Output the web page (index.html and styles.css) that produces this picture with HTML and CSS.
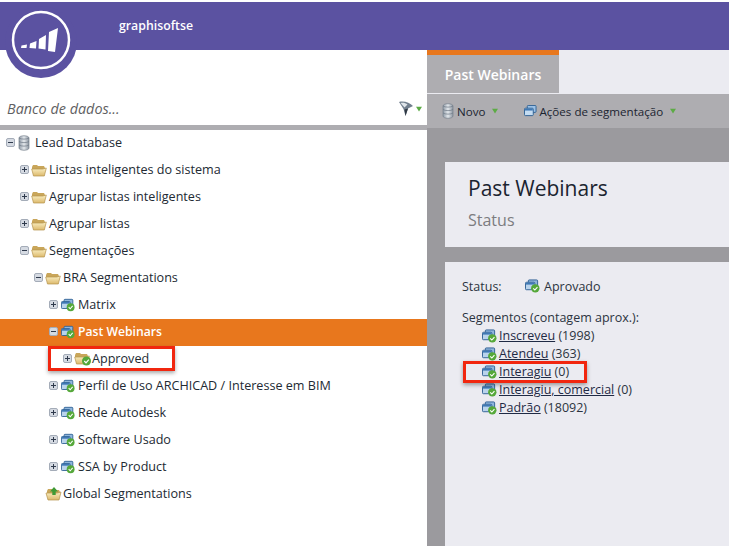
FILE: index.html
```html
<!DOCTYPE html>
<html lang="pt">
<head>
<meta charset="utf-8">
<title>Past Webinars</title>
<link rel="stylesheet" href="styles.css">
</head>
<body>
<svg class="defs" width="0" height="0" aria-hidden="true">
  <defs>
    <linearGradient id="fold" x1="0" y1="0" x2="0" y2="1"><stop offset="0" stop-color="#fbf0c4"/><stop offset="1" stop-color="#dcb96c"/></linearGradient>
    <linearGradient id="db" x1="0" y1="0" x2="1" y2="0"><stop offset="0" stop-color="#8f9aa6"/><stop offset=".5" stop-color="#e4e8ec"/><stop offset="1" stop-color="#8b95a0"/></linearGradient>
    <symbol id="plus" viewBox="0 0 9 9"><rect x=".5" y=".5" width="8" height="8" rx="1.5" fill="#d5dae2" stroke="#a4acb8"/><path d="M2 4.500h5M4.500 2v5" stroke="#2f3a4c"/></symbol>
    <symbol id="minus" viewBox="0 0 9 9"><rect x=".5" y=".5" width="8" height="8" rx="1.5" fill="#d5dae2" stroke="#a4acb8"/><path d="M2 4.500h5" stroke="#2f3a4c"/></symbol>
    <symbol id="folder" viewBox="0 0 16 14"><path d="M1 4l1-2h4l1 1h6l1 2v1H1z" fill="#c9a65a"/><path d="M.7 6h11l3.600-1-2 8H2.500z" fill="url(#fold)" stroke="#b5924c" stroke-width=".7"/></symbol>
    <symbol id="database" viewBox="0 0 12 16"><path d="M1 3c0-3 10-3 10 0v10c0 3-10 3-10 0z" fill="url(#db)" stroke="#77818c" stroke-width=".7"/><path d="M1 6.500c2 1.500 8 1.500 10 0M1 10c2 1.500 8 1.500 10 0M1 3c2 1.500 8 1.500 10 0" fill="none" stroke="#6f7985" stroke-width=".7"/></symbol>
    <symbol id="seg" viewBox="0 0 14 13"><rect x="3.500" y=".5" width="9.500" height="7.500" rx="1" fill="#9cc1e6" stroke="#2d5f93"/><rect x=".5" y="3.500" width="9.500" height="8" rx="1" fill="#c4dcf2" stroke="#2d5f93"/><rect x="1" y="4" width="8.500" height="2" fill="#3f79b5"/></symbol>
    <symbol id="segok" viewBox="0 0 16 15"><rect x="3.500" y="1" width="10" height="7" rx="1" fill="#8fb6dc" stroke="#2d5f93"/><rect x=".5" y="3.500" width="10" height="8" rx="1" fill="#b9d3ec" stroke="#2d5f93"/><rect x="1" y="4" width="9" height="2" fill="#3f79b5"/><circle cx="11" cy="10" r="4.500" fill="#55a83a"/><path d="M8.800 10l1.700 1.800 2.800-3.200" fill="none" stroke="#fff" stroke-width="1.200"/></symbol>
    <symbol id="folderok" viewBox="0 0 18 15"><path d="M1 4l1-2h4l1 1h6l1 2v1H1z" fill="#c9a65a"/><path d="M.7 6h11l3.600-1-2 8H2.500z" fill="url(#fold)" stroke="#b5924c" stroke-width=".7"/><circle cx="12.500" cy="10" r="4.500" fill="#55a83a"/><path d="M10.300 10l1.700 1.800 2.800-3.200" fill="none" stroke="#fff" stroke-width="1.200"/></symbol>
    <symbol id="folderup" viewBox="0 0 18 15"><path d="M2 5l1-2h4l1 1h6l1 2v1H2z" fill="#c9a65a"/><path d="M1 7h11l4-1-2 8H3z" fill="url(#fold)" stroke="#b5924c" stroke-width=".7"/><path d="M9 1l4 4.500h-2.300V9H7.300V5.500H5z" fill="#3f9a35"/></symbol>
    <symbol id="tri" viewBox="0 0 7 6"><path d="M0 .5h7L3.500 6z" fill="#5cab45"/></symbol>
    <symbol id="funnel" viewBox="0 0 16 16"><path d="M1 1c5-1.500 11 1 14 4l-5 2.500-2.500 7.500L5.500 8z" fill="#717f8e"/><path d="M2.500 2c3-.5 5 0 7 1.500L6.500 6.500z" fill="#dfe5ea"/><path d="M10 7.500L7.500 15 6.500 8.500z" fill="#2f3843"/></symbol>
  </defs>
</svg>

<header class="topbar">
  <div class="logo">
    <svg class="logo-mark" viewBox="0 0 60 60" aria-hidden="true">
      <circle cx="30" cy="30" r="28" fill="none" stroke="#fff" stroke-width="2.500"/>
      <path d="M10.500 35.500l5.500-1-.5 3.500H10zM19 33.500l6.500-2.500-.5 7.500-6.500-.5zM28 29l7-4-.5 14.500-7-1zM38 22l9-4-3 24-7-1z" fill="#fff"/>
    </svg>
  </div>
  <span class="account">graphisoftse</span>
</header>

<main class="app">
  <aside class="sidebar">
    <div class="search">
      <span class="search-label">Banco de dados...</span>
      <span class="search-tools">
        <svg class="ic-funnel"><use href="#funnel"/></svg>
        <svg class="ic-tri"><use href="#tri"/></svg>
      </span>
    </div>
    <ul class="tree">
      <li class="row lv0"><svg class="ic-box"><use href="#minus"/></svg><svg class="ic-db"><use href="#database"/></svg><span>Lead Database</span></li>
      <li class="row lv1"><svg class="ic-box"><use href="#plus"/></svg><svg class="ic-folder"><use href="#folder"/></svg><span>Listas inteligentes do sistema</span></li>
      <li class="row lv1"><svg class="ic-box"><use href="#plus"/></svg><svg class="ic-folder"><use href="#folder"/></svg><span>Agrupar listas inteligentes</span></li>
      <li class="row lv1"><svg class="ic-box"><use href="#plus"/></svg><svg class="ic-folder"><use href="#folder"/></svg><span>Agrupar listas</span></li>
      <li class="row lv1"><svg class="ic-box"><use href="#minus"/></svg><svg class="ic-folder"><use href="#folder"/></svg><span>Segmentações</span></li>
      <li class="row lv2"><svg class="ic-box"><use href="#minus"/></svg><svg class="ic-folder"><use href="#folder"/></svg><span>BRA Segmentations</span></li>
      <li class="row lv3"><svg class="ic-box"><use href="#plus"/></svg><svg class="ic-seg"><use href="#segok"/></svg><span>Matrix</span></li>
      <li class="row lv3 selected"><svg class="ic-box"><use href="#minus"/></svg><svg class="ic-seg"><use href="#segok"/></svg><span>Past Webinars</span></li>
      <li class="row lv4 marked"><svg class="ic-box"><use href="#plus"/></svg><svg class="ic-folderok"><use href="#folderok"/></svg><span>Approved</span></li>
      <li class="row lv3"><svg class="ic-box"><use href="#plus"/></svg><svg class="ic-seg"><use href="#segok"/></svg><span>Perfil de Uso ARCHICAD / Interesse em BIM</span></li>
      <li class="row lv3"><svg class="ic-box"><use href="#plus"/></svg><svg class="ic-seg"><use href="#segok"/></svg><span>Rede Autodesk</span></li>
      <li class="row lv3"><svg class="ic-box"><use href="#plus"/></svg><svg class="ic-seg"><use href="#segok"/></svg><span>Software Usado</span></li>
      <li class="row lv3"><svg class="ic-box"><use href="#plus"/></svg><svg class="ic-seg"><use href="#segok"/></svg><span>SSA by Product</span></li>
      <li class="row lv2 noexp"><svg class="ic-folderok"><use href="#folderup"/></svg><span>Global Segmentations</span></li>
    </ul>
  </aside>

  <section class="content">
    <div class="tabs"><div class="tab">Past Webinars</div></div>
    <div class="toolbar">
      <span class="tool"><svg class="ic-db"><use href="#database"/></svg>Novo<svg class="ic-tri"><use href="#tri"/></svg></span>
      <span class="tool"><svg class="ic-tool"><use href="#seg"/></svg>Ações de segmentação<svg class="ic-tri"><use href="#tri"/></svg></span>
    </div>
    <div class="stage">
      <div class="panel title-panel">
        <h1>Past Webinars</h1>
        <p>Status</p>
      </div>
      <div class="panel detail-panel">
        <div class="status"><span class="status-key">Status:</span><svg class="ic-status"><use href="#segok"/></svg><span>Aprovado</span></div>
        <div class="seg-head">Segmentos (contagem aprox.):</div>
        <ul class="segs">
          <li><svg class="ic-small"><use href="#segok"/></svg><a href="#">Inscreveu</a> (1998)</li>
          <li><svg class="ic-small"><use href="#segok"/></svg><a href="#">Atendeu</a> (363)</li>
          <li class="marked"><svg class="ic-small"><use href="#segok"/></svg><a href="#">Interagiu</a> (0)</li>
          <li><svg class="ic-small"><use href="#segok"/></svg><a href="#">Interagiu, comercial</a> (0)</li>
          <li><svg class="ic-small"><use href="#segok"/></svg><a href="#">Padrão</a> (18092)</li>
        </ul>
      </div>
    </div>
  </section>
</main>
</body>
</html>
```

FILE: styles.css
```css
* { box-sizing: border-box; }
html, body { margin: 0; padding: 0; height: 546px; overflow: hidden; }
body {
  background: #fff;
  font-family: "Open Sans", sans-serif;
  font-size: 12.500px;
  color: #222a33;
  padding-top: 2px;
  position: relative;
}
.defs { position: absolute; }
ul { list-style: none; margin: 0; padding: 0; }
svg { display: block; flex: none; }

.topbar {
  height: 48px;
  background: #5b52a1;
  display: flex;
  align-items: center;
  padding-left: 119px;
  padding-bottom: 2px;
}
.account { color: #fff; font-weight: 600; font-size: 12.300px; }
.logo {
  position: absolute;
  left: 5px;
  top: 6px;
  width: 72px;
  height: 72px;
  border-radius: 50%;
  background: #5b52a1;
  display: flex;
  align-items: center;
  justify-content: center;
  padding-bottom: 4px;
}
.logo-mark { width: 60px; height: 60px; }

.app { display: flex; height: 496px; }
.sidebar { width: 427px; flex: none; }
.search {
  height: 80px;
  padding: 49px 5px 0 7px;
  border-bottom: 5px solid #aeadb1;
  display: flex;
  justify-content: space-between;
}
.search-label { font-style: italic; font-size: 14.400px; color: #5f5f63; height: 20px; line-height: 20px; }
.search-tools { display: flex; align-items: center; gap: 2px; height: 20px; }
.ic-funnel { width: 16px; height: 16px; }
.ic-tri { width: 6px; height: 6px; }

.row {
  height: 27px;
  display: flex;
  align-items: center;
  font-size: 12.600px;
  white-space: nowrap;
  padding-bottom: 2px;
}
.lv0 { padding-left: 6px; }
.lv1 { padding-left: 20px; }
.lv2 { padding-left: 34px; }
.lv3 { padding-left: 49px; }
.lv4 { padding-left: 63px; }
.lv2.noexp { padding-left: 45px; }
.selected { background: #e8771d; color: #fff; font-weight: 600; font-size: 12.200px; }
.ic-box { width: 9px; height: 9px; margin-right: 2px; }
.ic-db { width: 12px; height: 16px; margin-right: 5px; }
.ic-folder { width: 16px; height: 14px; margin-right: 2px; }
.ic-folderok { width: 18px; height: 15px; }
.ic-seg { width: 14px; height: 14px; margin: 0 3px 0 1px; }
.ic-status { width: 15px; height: 14px; margin-right: 4px; }
.row.lv0 .ic-box { margin-right: 3px; }

.marked { position: relative; }
.marked::after {
  content: "";
  position: absolute;
  box-sizing: border-box;
  border: 3px solid #f1260f;
  box-shadow: 0 2px 4px rgba(0, 0, 0, .35);
  pointer-events: none;
}
.row.marked::after { left: 48px; top: 0; width: 127px; height: 25px; }
.segs .marked::after { left: -19px; top: -2px; width: 124px; height: 22px; }

.content { flex: 1; display: flex; flex-direction: column; min-width: 0; }
.tabs { height: 43px; background: #ebebf1; flex: none; display: flex; }
.tab {
  width: 132px;
  background: #aeadb1;
  border-top: 5px solid #e8771d;
  color: #fff;
  font-weight: 600;
  font-size: 14px;
  display: flex;
  align-items: center;
  justify-content: center;
  height: 43px;
}
.toolbar {
  height: 35px;
  flex: none;
  background: #aeadb1;
  border-top: 1px solid #ebebf1;
  display: flex;
  align-items: center;
  padding-left: 15px;
  gap: 26px;
  font-size: 11.600px;
  color: #1b2430;
}
.tool { display: flex; align-items: center; }
.tool .ic-db { margin-right: 3px; }
.tool .ic-tri { margin-left: 7px; }
.ic-tool { width: 13px; height: 12px; margin-right: 2px; }

.stage {
  flex: 1;
  background: #9b9a9e;
  padding: 34px 0 0 18px;
  display: flex;
  flex-direction: column;
  gap: 15px;
}
.panel { background: #ebebf1; }
.title-panel { height: 85px; padding: 12px 0 0 23px; flex: none; }
.title-panel h1 { margin: 0; font-size: 21px; font-weight: 400; color: #1b2430; line-height: 28px; }
.title-panel p { margin: 6px 0 0; font-size: 16px; color: #7c7c80; line-height: 24px; }
.detail-panel { flex: 1; padding: 15px 0 0 17px; font-size: 12.500px; color: #2b3440; }
.status { display: flex; align-items: center; height: 18px; }
.status-key { width: 63px; }
.seg-head { margin-top: 14px; height: 18px; line-height: 18px; }
.segs { padding-left: 20px; }
.segs li { height: 18px; line-height: 18px; display: flex; align-items: center; white-space: pre; }
.segs a { color: #1f2a45; text-decoration: underline; }
.ic-small { width: 15px; height: 14px; margin-right: 2px; }
```
